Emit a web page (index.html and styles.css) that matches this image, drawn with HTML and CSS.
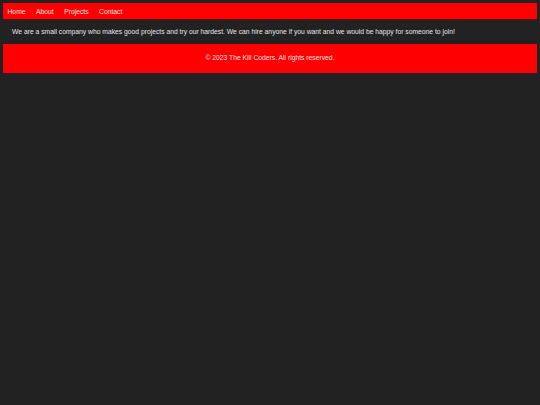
FILE: index.html
```html
<!DOCTYPE html>
<html>
<head>
<meta charset="utf-8">
<title>The Kill Coders</title>
<link rel="stylesheet" href="styles.css">
</head>
<body>
<nav class="nav">
  <a class="nav-link" href="#">Home</a>
  <a class="nav-link" href="#">About</a>
  <a class="nav-link" href="#">Projects</a>
  <a class="nav-link" href="#">Contact</a>
</nav>
<main class="content">
  <p class="intro">We are a small company who makes good projects and try our hardest. We can hire anyone if you want and we would be happy for someone to join!</p>
</main>
<footer class="footer">
  <p class="copy">&copy; 2023 The Kill Coders. All rights reserved.</p>
</footer>
</body>
</html>
```

FILE: styles.css
```css
html, body {
  background: #222222;
}
body {
  margin: 3px;
  font-family: "Liberation Sans", Arial, sans-serif;
  font-size: 6.75px;
  line-height: 8px;
  color: #e6e6e6;
}
.nav {
  display: flex;
  gap: 10.5px;
  background: #ff0000;
  box-shadow: 0 0 1px 0.5px rgba(120, 0, 0, 0.8);
  padding: 4.5px 5px 3.5px 4.5px;
}
.nav-link {
  color: #ffe0e0;
  text-decoration: none;
}
.content {
  padding: 8.5px 9px 8px 9px;
}
.intro {
  margin: 0;
  color: #e6e6e6;
}
.footer {
  background: #ff0000;
  box-shadow: 0 0 1px 0.5px rgba(120, 0, 0, 0.8);
  padding: 10.5px 0 10.5px 0;
  text-align: center;
}
.copy {
  margin: 0;
  color: #ffe0e0;
}
```
